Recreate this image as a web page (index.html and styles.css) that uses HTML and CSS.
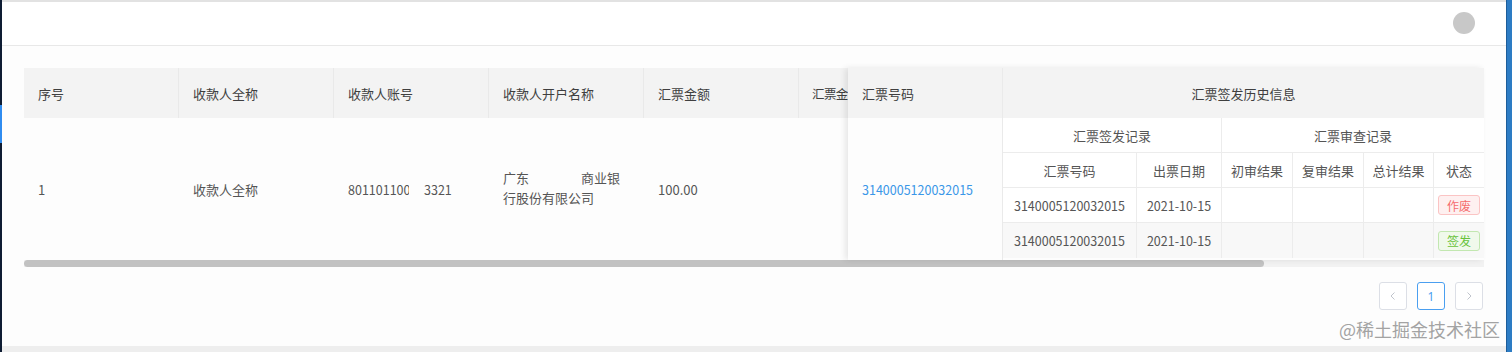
FILE: index.html
```html
<!DOCTYPE html>
<html lang="zh-CN">
<head>
<meta charset="utf-8">
<title>汇票签发</title>
<link rel="stylesheet" href="styles.css">
</head>
<body>
<div class="app">
  <aside class="sidebar"><div class="sidebar-active"></div></aside>
  <main class="main">
    <header class="topbar"><div class="avatar"></div></header>
    <section class="content">
      <div class="table">
        <div class="table-scroll">
          <div class="th">序号</div>
          <div class="th">收款人全称</div>
          <div class="th">收款人账号</div>
          <div class="th">收款人开户名称</div>
          <div class="th">汇票金额</div>
          <div class="th th-cut"><span class="cut">汇票金</span></div>
          <div class="td">1</div>
          <div class="td">收款人全称</div>
          <div class="td"><span class="acct-a">801101100</span><span class="acct-b">3321</span></div>
          <div class="td bank"><span>广东</span><span class="gap"></span><span>商业银</span><br><span>行股份有限公司</span></div>
          <div class="td">100.00</div>
          <div class="td"></div>
        </div>
        <div class="table-fixed">
          <div class="th">汇票号码</div>
          <div class="th th-center">汇票签发历史信息</div>
          <div class="td"><a class="link num">3140005120032015</a></div>
          <div class="td td-sub">
            <div class="sub">
              <div class="sc span2">汇票签发记录</div>
              <div class="sc span4">汇票审查记录</div>
              <div class="sc">汇票号码</div>
              <div class="sc">出票日期</div>
              <div class="sc">初审结果</div>
              <div class="sc">复审结果</div>
              <div class="sc">总计结果</div>
              <div class="sc">状态</div>
              <div class="sc num">3140005120032015</div>
              <div class="sc num">2021-10-15</div>
              <div class="sc"></div>
              <div class="sc"></div>
              <div class="sc"></div>
              <div class="sc"><span class="tag tag-red">作废</span></div>
              <div class="sc alt num">3140005120032015</div>
              <div class="sc alt num">2021-10-15</div>
              <div class="sc alt"></div>
              <div class="sc alt"></div>
              <div class="sc alt"></div>
              <div class="sc alt"><span class="tag tag-green">签发</span></div>
            </div>
          </div>
        </div>
        <div class="scrollbar"><div class="thumb"></div></div>
      </div>
      <div class="pager">
        <button class="pg pg-disabled"><svg width="10" height="10" viewBox="0 0 10 10"><path d="M6.5 1.5 3 5l3.5 3.5" fill="none" stroke="#c0c4cc" stroke-width="1"/></svg></button>
        <button class="pg pg-active">1</button>
        <button class="pg pg-disabled"><svg width="10" height="10" viewBox="0 0 10 10"><path d="M3.5 1.5 7 5 3.5 8.5" fill="none" stroke="#c0c4cc" stroke-width="1"/></svg></button>
      </div>
    </section>
    <div class="bottom-band"></div>
  </main>
  <div class="rightbar"></div>
</div>
<div class="watermark">@稀土掘金技术社区</div>
</body>
</html>
```

FILE: styles.css
```css
* { box-sizing: border-box; }
html, body { margin: 0; padding: 0; }
body {
  width: 1512px;
  height: 352px;
  overflow: hidden;
  position: relative;
  font-family: "Noto Sans CJK SC", "Microsoft YaHei", "Noto Sans", sans-serif;
  font-size: 13px;
  color: #555;
  background: #fff;
}
.app { display: flex; height: 352px; }
.sidebar { width: 2px; background: #0e1c33; }
.sidebar-active { margin-top: 105px; height: 38px; background: #2f8cf0; }
.rightbar { width: 6px; background: #2d7cc4; border-left: 1px solid #1d5d9a; }
.main {
  flex: 1;
  display: flex;
  flex-direction: column;
  border-top: 2px solid #e2e2e2;
  background: #fdfdfd;
}
.topbar {
  height: 44px;
  border-bottom: 1px solid #e8e8e8;
  background: #fff;
  display: flex;
  align-items: center;
  justify-content: flex-end;
  padding-right: 31px;
}
.avatar { width: 22px; height: 22px; border-radius: 50%; background: #c8c8c8; margin-top: -2px; }
.content { flex: 1; padding: 22px 22px 0 22px; }
.bottom-band { height: 6px; background: #eeeeee; }

.table { position: relative; width: 1460px; }
.table-scroll {
  display: grid;
  grid-template-columns: repeat(5, 155px) 49px;
  grid-template-rows: 50px 142px;
  overflow: hidden;
  width: 824px;
}
.th {
  background: #f3f3f3;
  color: #3f3f3f;
  display: flex;
  align-items: center;
  padding-left: 14px;
  border-right: 1px solid #e9e9e9;
  white-space: nowrap;
}
.table-scroll .th:nth-child(6) { border-right: none; }
.th-cut { padding-left: 13px; }
.cut { letter-spacing: -0.6px; font-size: 12.5px; }
.td {
  background: #fdfdfd;
  display: flex;
  align-items: center;
  padding-left: 14px;
  color: #555;
  white-space: nowrap;
}
.num { font-size: 12.5px; }
.acct-a { display: inline-block; width: 61px; overflow: hidden; font-size: 12.5px; }
.acct-b { margin-left: 15px; font-size: 12.5px; }
.td.bank { display: block; padding-top: 50px; line-height: 20px; white-space: normal; }
.gap { display: inline-block; width: 52px; }

.table-fixed {
  position: absolute;
  top: 0;
  right: 0;
  width: 636px;
  height: 192px;
  display: grid;
  grid-template-columns: 155px 481px;
  grid-template-rows: 50px 142px;
  background: #fdfdfd;
  box-shadow: -3px 0 6px rgba(0, 0, 0, 0.09);
}
.th-center { justify-content: center; padding-left: 0; border-right: none; padding-right: 0; }
.table-fixed .th:first-child { border-right: 1px solid #eaeaea; }
.table-fixed .td:nth-child(3) { border-right: 1px solid #eaeaea; }
.link { color: #3a97e8; }
.td-sub { padding: 0; align-items: flex-start; }
.sub {
  display: grid;
  grid-template-columns: 134px 85px 71px 71px 70px 50px;
  grid-template-rows: repeat(4, 35px);
  width: 481px;
}
.sc {
  display: flex;
  align-items: center;
  justify-content: center;
  border-right: 1px solid #ececec;
  border-bottom: 1px solid #ececec;
  color: #555;
  white-space: nowrap;
  background: #fff;
}
.sc:nth-child(2), .sc:nth-child(8), .sc:nth-child(14), .sc:nth-child(20) { border-right: none; }
.sc.alt { background: #f8f8f8; border-bottom: none; }
.span2 { grid-column: span 2; }
.span4 { grid-column: span 4; }
.tag {
  display: inline-flex;
  align-items: center;
  height: 20px;
  padding: 0 8px;
  font-size: 12px;
  border-radius: 3px;
  border: 1px solid;
}
.tag-red { color: #f56c6c; background: #fef0f0; border-color: #fbc4c4; }
.tag-green { color: #67c23a; background: #f0f9eb; border-color: #c2e7b0; }

.scrollbar { height: 7px; background: #f2f2f2; margin-top: 0; }
.thumb { width: 1240px; height: 7px; border-radius: 4px; background: #c2c2c2; }

.pager { display: flex; justify-content: flex-end; gap: 10px; margin-top: 15px; padding-right: 1px; }
.pg {
  width: 28px;
  height: 28px;
  border: 1px solid #dcdfe6;
  border-radius: 3px;
  background: #fff;
  display: flex;
  align-items: center;
  justify-content: center;
  padding: 0;
  font-family: "Noto Sans", sans-serif;
  font-size: 12px;
}
.pg-active { border-color: #4a9ff0; color: #4a9ff0; }

.watermark {
  position: absolute;
  right: 12px;
  bottom: 12px;
  font-size: 18px;
  line-height: 22px;
  color: #a3a3a3;
  text-shadow: 0 0 2px #fff;
}
```
